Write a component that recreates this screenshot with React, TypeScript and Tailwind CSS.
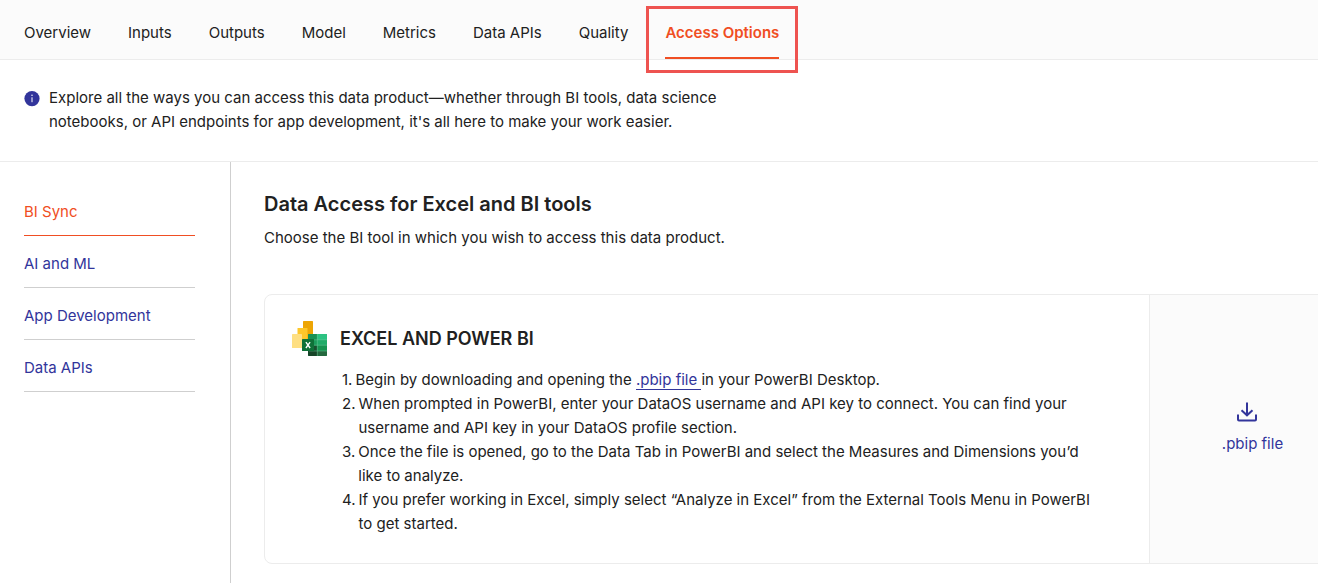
const tabs = ["Overview", "Inputs", "Outputs", "Model", "Metrics", "Data APIs", "Quality"];
const sections = ["AI and ML", "App Development", "Data APIs"];

function InfoIcon() {
  return (
    <svg className="mt-[5px] size-4 shrink-0" viewBox="0 0 16 16" aria-hidden="true">
      <circle cx="8" cy="7.6" r="7.6" fill="#32359b" />
      <path d="M8 6.3V11.2" stroke="#fff" strokeWidth="1" />
      <circle cx="8" cy="4.3" r="0.75" fill="#fff" />
    </svg>
  );
}

function ProductsIcon() {
  return (
    <svg className="size-9 shrink-0" viewBox="0 0 36 36" aria-hidden="true">
      <rect x="11" y="0" width="10" height="20" rx="0.6" fill="#eda504" />
      <rect x="5.5" y="7" width="10" height="20" rx="0.6" fill="#fdc72b" />
      <rect x="0" y="13" width="10" height="14" rx="0.6" fill="#fedf82" />
      <rect x="16" y="13" width="19" height="22" rx="1" fill="#1b9c5b" />
      <path d="M16 14a1 1 0 0 1 1-1h8v6h-9z" fill="#189154" />
      <path d="M25 13h9a1 1 0 0 1 1 1v5H25z" fill="#2cc282" />
      <path d="M25 19h10v5.5H25z" fill="#20ac68" />
      <path d="M25 24.500h10V30H25z" fill="#15934f" />
      <path d="M16 24.500h9V30h-9z" fill="#17512f" />
      <path d="M16 30h9v5h-8a1 1 0 0 1-1-1z" fill="#174528" />
      <path d="M25 30h10v4a1 1 0 0 1-1 1h-9z" fill="#24683e" />
      <path d="M25.300 13v22M22 18.800h13M22 24.200h13M17 30h18" stroke="#6bc397" strokeOpacity="0.65" strokeWidth="0.8" />
      <rect x="10" y="18" width="12" height="12" rx="0.6" fill="#0f7138" />
      <path d="M13.900 21.200l4.200 5.800M18.100 21.200l-4.200 5.800" stroke="#fff" strokeWidth="1.400" />
    </svg>
  );
}

function DownloadIcon() {
  return (
    <svg
      className="mr-[10px] h-5 w-5 shrink-0"
      viewBox="0 0 20 20"
      fill="none"
      stroke="#32359b"
      strokeWidth="2"
      aria-hidden="true"
    >
      <path d="M10 0.500V13M4.500 8.200L10 13.300L15.500 8.200" />
      <path d="M1 12.500V17.500Q1 18.500 2 18.500H18Q19 18.500 19 17.500V12.500" />
    </svg>
  );
}

export default function App() {
  return (
    <div className="flex min-h-screen flex-col overflow-x-hidden bg-white font-['Inter',sans-serif] text-[15px] leading-6 text-[#212121]">
      <nav className="flex h-[60px] shrink-0 gap-[37px] border-b border-[#ececec] bg-[#fbfbfb] px-6">
        {tabs.map((tab) => (
          <a key={tab} href="#" className="pt-[21px] whitespace-nowrap">
            {tab}
          </a>
        ))}
        <a
          href="#"
          aria-current="page"
          className="relative h-[59px] border-b-2 border-[#f04e23] pt-[21px] font-semibold whitespace-nowrap text-[#f04e23]"
        >
          Access Options
          <span className="pointer-events-none absolute -inset-x-[19px] top-1.5 -bottom-4 border-3 border-[#ee5350]" />
        </a>
      </nav>

      <div className="flex gap-[9px] border-b border-[#ececec] px-6 pt-[26px] pb-[27px]">
        <InfoIcon />
        <p className="max-w-[700px]">
          Explore all the ways you can access this data product—whether through BI tools, data science
          notebooks, or API endpoints for app development, it's all here to make your work easier.
        </p>
      </div>

      <div className="flex flex-1">
        <aside className="w-[231px] shrink-0 border-r border-[#cfcfcf] pt-[38px] pr-[35px] pl-6">
          <ul className="flex flex-col gap-4 text-[#32359b]">
            <li className="border-b border-[#f04e23] pb-[11px] text-[#f04e23]">
              <a href="#">BI Sync</a>
            </li>
            {sections.map((section) => (
              <li key={section} className="border-b border-[#cfcfcf] pb-[11px]">
                <a href="#">{section}</a>
              </li>
            ))}
          </ul>
        </aside>

        <main className="min-w-0 flex-1 pt-7 pb-5 pl-[33px]">
          <h1 className="text-xl leading-7 font-semibold">Data Access for Excel and BI tools</h1>
          <p className="mt-2">Choose the BI tool in which you wish to access this data product.</p>

          <section className="mt-11 -mr-[38px] flex rounded-lg border border-[#ececec]">
            <div className="flex min-w-0 flex-1 gap-3 pt-[26px] pr-[54px] pb-[27px] pl-[27px]">
              <ProductsIcon />
              <div>
                <h2 className="mt-1 text-lg leading-7 font-semibold">EXCEL AND POWER BI</h2>
                <ol className="mt-[15px] pl-0.5">
                  <li className="flex gap-[3px]">
                    <span>1.</span>
                    <span>
                      Begin by downloading and opening the{" "}
                      <a href="#" className="border-b border-[#32359b] whitespace-pre text-[#32359b]">
                        {".pbip file "}
                      </a>
                      in your PowerBI Desktop.
                    </span>
                  </li>
                  <li className="flex gap-[3px]">
                    <span>2.</span>
                    <span>
                      When prompted in PowerBI, enter your DataOS username and API key to connect. You can find your
                      username and API key in your DataOS profile section.
                    </span>
                  </li>
                  <li className="flex gap-[3px]">
                    <span>3.</span>
                    <span>
                      Once the file is opened, go to the Data Tab in PowerBI and select the Measures and Dimensions
                      you’d like to analyze.
                    </span>
                  </li>
                  <li className="flex gap-[3px]">
                    <span>4.</span>
                    <span>
                      If you prefer working in Excel, simply select “Analyze in Excel” from the External Tools Menu in
                      PowerBI to get started.
                    </span>
                  </li>
                </ol>
              </div>
            </div>
            <div className="flex w-[206px] shrink-0 items-center justify-center rounded-r-lg border-l border-[#ececec] bg-[#fbfbfb]">
              <button type="button" className="flex flex-col items-center gap-[10px] text-[#32359b]">
                <DownloadIcon />
                .pbip file
              </button>
            </div>
          </section>
        </main>
      </div>
    </div>
  );
}
